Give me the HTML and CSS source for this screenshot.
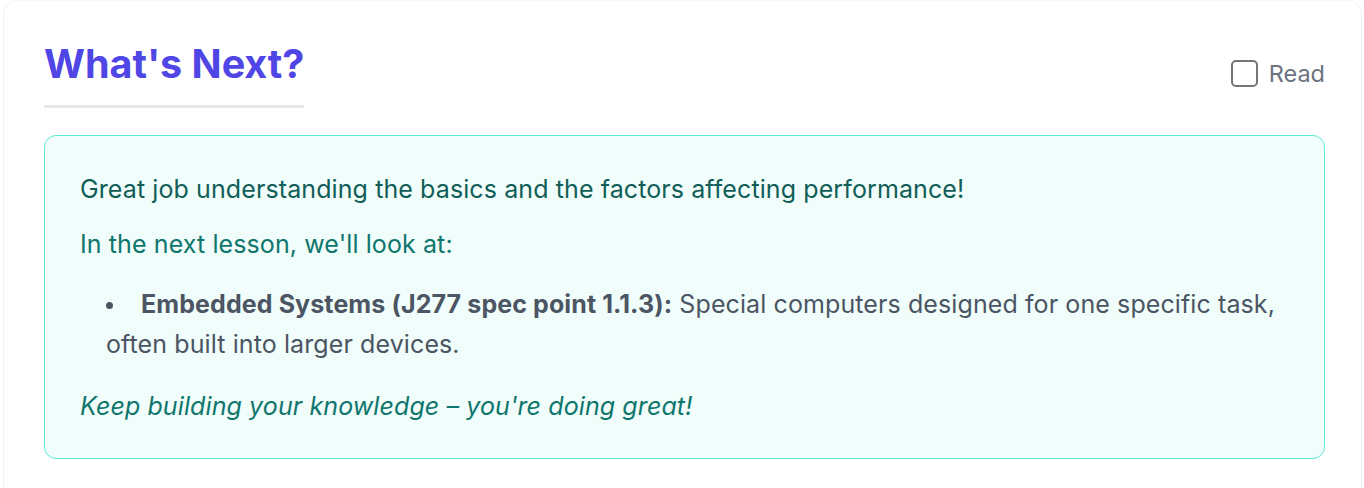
FILE: index.html
```html
<!DOCTYPE html>
<html lang="en">
<head>
<meta charset="utf-8">
<link rel="stylesheet" href="styles.css">
</head>
<body>
<section class="card">
  <header class="card-head">
    <h2 class="title">What's Next?</h2>
    <label class="read">
      <span class="box"></span>
      <span class="read-label">Read</span>
    </label>
  </header>
  <div class="note">
    <p class="lead">Great job understanding the basics and the factors affecting performance!</p>
    <p class="sub">In the next lesson, we'll look at:</p>
    <ul class="list">
      <li><strong>Embedded Systems (J277 spec point 1.1.3):</strong> Special computers designed for one specific task, often built into larger devices.</li>
    </ul>
    <p class="outro"><em>Keep building your knowledge – you're doing great!</em></p>
  </div>
</section>
</body>
</html>
```
FILE: styles.css
```css
* { box-sizing: border-box; }
html, body { margin: 0; padding: 0; background: #ffffff; }
body {
  font-family: Inter, "Noto Sans", sans-serif;
  padding: 0 2px 0 3px;
  overflow: hidden;
}
.card {
  border: 1px solid #f0f0f0;
  border-top-color: #f7f7f7;
  border-radius: 14px;
  background: #fff;
  padding: 38px 36px 40px 40px;
  min-height: 520px;
}
.card-head {
  display: flex;
  justify-content: space-between;
  align-items: center;
}
.title {
  margin: 0;
  font-size: 39.5px;
  line-height: 1.3;
  font-weight: 700;
  color: #4f46e5;
  padding-bottom: 15px;
  border-bottom: 3px solid #e5e7eb;
  display: inline-block;
}
.read {
  display: flex;
  align-items: center;
  gap: 11px;
}
.box {
  width: 27px;
  height: 27px;
  border: 2px solid #767676;
  border-radius: 5px;
  background: #fff;
}
.read-label {
  font-size: 23.5px;
  color: #6b7280;
}
.note {
  margin-top: 27px;
  background: #f0fdfa;
  border: 1px solid #5eead4;
  border-radius: 12px;
  padding: 36px 35px 35px 35px;
  font-size: 25px;
  letter-spacing: 0.1px;
}
.note p { margin: 0; line-height: 34px; }
.lead { color: #115e59; margin-bottom: 21px !important; }
.sub { color: #0f766e; }
.list {
  margin: 23px 0 25px 0;
  padding-left: 26px;
  line-height: 40px;
  color: #4b5563;
  list-style: none;
}
.list li::before {
  content: "";
  display: inline-block;
  width: 7px;
  height: 7px;
  border-radius: 50%;
  background: #4b5563;
  margin-right: 28px;
  vertical-align: 4px;
}
.list strong { color: #4b5563; font-weight: 700; }
.outro { color: #0f766e; }
```
